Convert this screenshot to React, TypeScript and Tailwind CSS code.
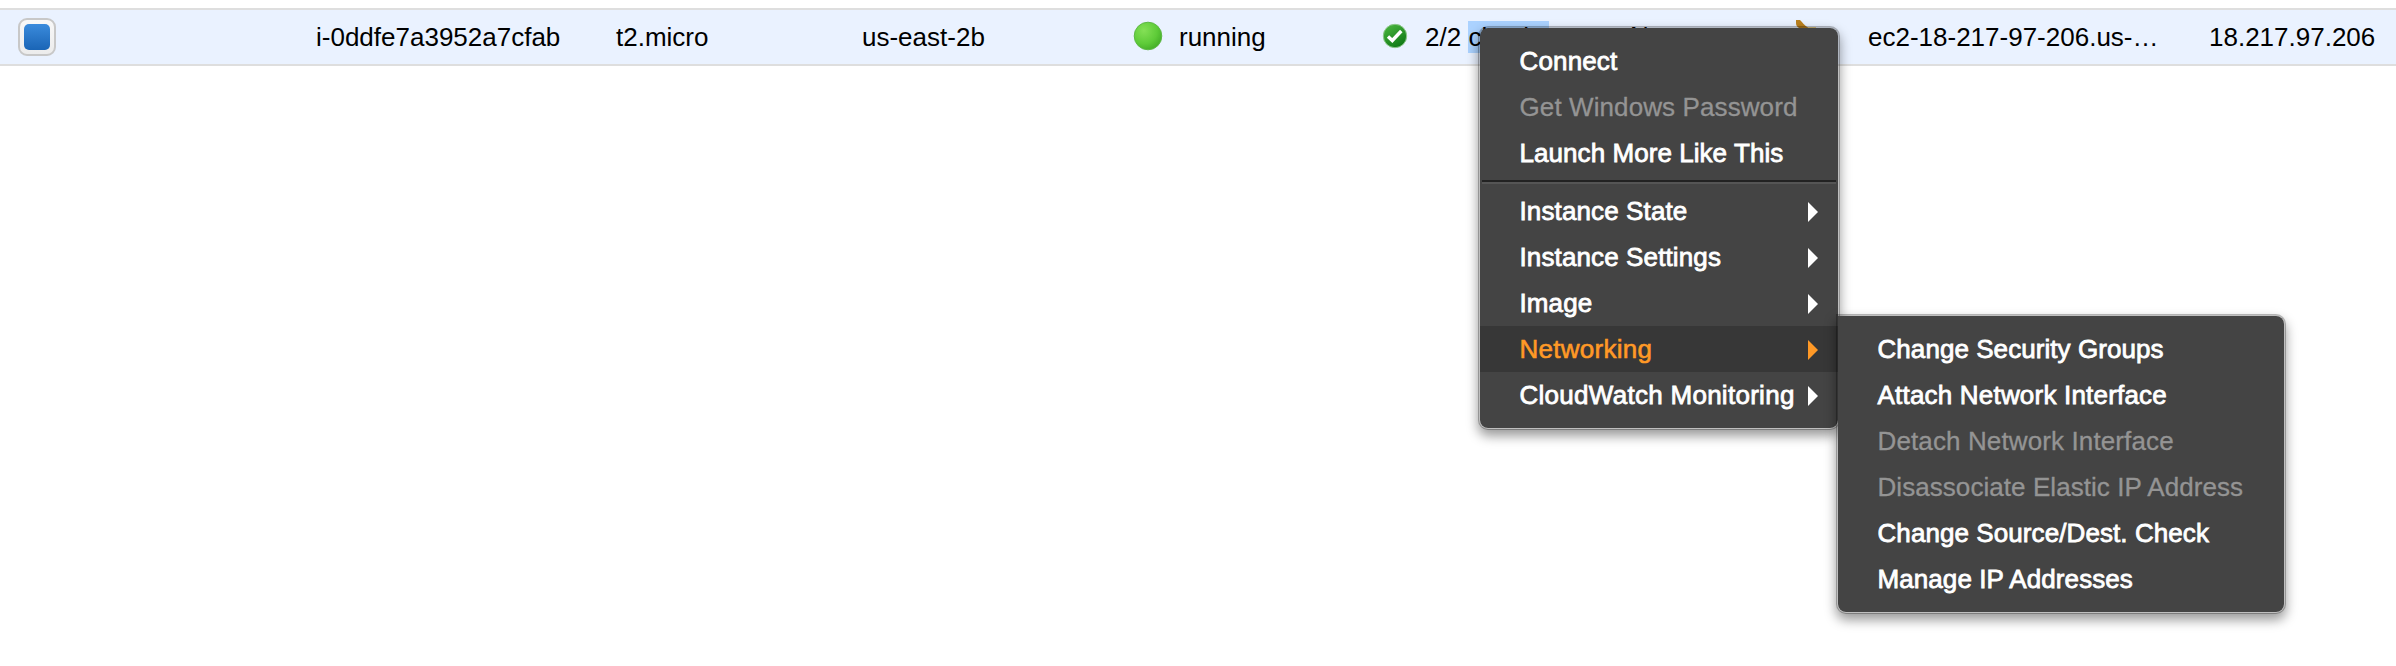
type Item = { label: string; disabled?: boolean; submenu?: boolean; active?: boolean; tracking: string };

const primary: Item[] = [
  { label: "Connect", tracking: "tracking-[0.15px]" },
  { label: "Get Windows Password", disabled: true, tracking: "tracking-[0.1px]" },
  { label: "Launch More Like This", tracking: "tracking-[0.06px]" },
];

const secondary: Item[] = [
  { label: "Instance State", submenu: true, tracking: "tracking-[0.12px]" },
  { label: "Instance Settings", submenu: true, tracking: "tracking-[0.12px]" },
  { label: "Image", submenu: true, tracking: "tracking-[0.1px]" },
  { label: "Networking", submenu: true, active: true, tracking: "tracking-[0.28px]" },
  { label: "CloudWatch Monitoring", submenu: true, tracking: "tracking-[0.28px]" },
];

const networking: Item[] = [
  { label: "Change Security Groups", tracking: "tracking-[0.06px]" },
  { label: "Attach Network Interface", tracking: "tracking-[0.2px]" },
  { label: "Detach Network Interface", disabled: true, tracking: "tracking-[0.12px]" },
  { label: "Disassociate Elastic IP Address", disabled: true, tracking: "tracking-[0.06px]" },
  { label: "Change Source/Dest. Check", tracking: "tracking-[0.08px]" },
  { label: "Manage IP Addresses", tracking: "tracking-[0.08px]" },
];

function MenuItem({ item }: { item: Item }) {
  const tone = item.disabled
    ? "text-[#949494] [-webkit-text-stroke:0.3px_#949494]"
    : item.active
      ? "bg-[#373737] text-[#ff9926] [-webkit-text-stroke:0.6px_#ff9926]"
      : "text-white [-webkit-text-stroke:0.8px_#ffffff]";
  return (
    <li className={`flex h-[46px] items-center justify-between pr-5 pl-[39.5px] ${tone}`}>
      <span className={item.tracking}>{item.label}</span>
      {item.submenu && (
        <svg width="10" height="20" viewBox="0 0 10 20" fill="currentColor" className="mt-0.5">
          <path d="M0 0L10 10L0 20Z" />
        </svg>
      )}
    </li>
  );
}

const panel =
  "absolute rounded-[10px] border-2 border-black/25 bg-[#444444] bg-clip-padding py-2.5 shadow-[0_6px_12px_rgba(0,0,0,0.4)]";

export default function App() {
  return (
    <div className="relative h-[666px] w-[2396px] overflow-hidden bg-white pt-2 font-['Liberation_Sans',Arial,sans-serif] text-[26px] leading-8 whitespace-nowrap text-black">
      <div className="flex h-[58px] items-center border-y-2 border-[#dedede] bg-[#eaf2ff] pl-[18px]">
        <div className="w-[298px]">
          <div className="flex size-[38px] items-center justify-center rounded-[9px] border-2 border-[#c8c8c8] bg-linear-to-b from-[#f8f8f8] to-[#ececec]">
            <div className="size-[26px] rounded-[5px] bg-linear-to-b from-[#3a8bdc] to-[#1a65b6]" />
          </div>
        </div>
        <div className="w-[300px]">i-0ddfe7a3952a7cfab</div>
        <div className="w-[246px]">t2.micro</div>
        <div className="w-[271px]">us-east-2b</div>
        <div className="flex w-[249px] items-center">
          <svg width="30" height="30" viewBox="0 0 30 30" className="mr-4 mb-0.5">
            <defs>
              <radialGradient id="ball" cx="0.35" cy="0.3" r="0.8">
                <stop offset="0" stopColor="#84e056" />
                <stop offset="0.6" stopColor="#5ecb38" />
                <stop offset="1" stopColor="#3fa824" />
              </radialGradient>
            </defs>
            <circle cx="15" cy="15" r="13.8" fill="url(#ball)" stroke="#5cb844" strokeWidth="1" />
          </svg>
          running
        </div>
        <div className="flex w-[248px] items-center">
          <svg width="26" height="26" viewBox="0 0 26 26" className="mr-[17px] mb-0.5">
            <defs>
              <linearGradient id="ok" x1="0.2" y1="0" x2="0.8" y2="1">
                <stop offset="0" stopColor="#4ab53e" />
                <stop offset="1" stopColor="#0a7412" />
              </linearGradient>
            </defs>
            <circle cx="13" cy="13" r="11.7" fill="url(#ok)" stroke="#8dc78a" strokeWidth="1" />
            <path d="M6 13.5L10.3 17.5L19.3 8" fill="none" stroke="#fff" strokeWidth="3.4" />
          </svg>
          <span className="whitespace-pre">2/2 </span>
          <span className="bg-[#abd2ff]">checks</span>
        </div>
        <div className="w-[166px] pb-0.5">None</div>
        <svg width="32" height="34" viewBox="0 0 32 34" className="mr-10">
          <path d="M0 0H4C6 2 9 6 12 7.5H20V34H6L3 8C1 7 0 5 0 3Z" fill="#b9801f" />
          <path d="M12 7H20V10H12Z" fill="#e6cf8a" />
        </svg>
        <div className="w-[341px]">ec2-18-217-97-206.us-…</div>
        <div>18.217.97.206</div>
      </div>

      <ul className={`${panel} top-[26px] left-[1478px] w-[362px]`}>
        {primary.map((i) => (
          <MenuItem key={i.label} item={i} />
        ))}
        <li className="mx-0.5 my-1 h-1 border-t-2 border-b-2 border-t-[#222222] border-b-[#555555]" />
        {secondary.map((i) => (
          <MenuItem key={i.label} item={i} />
        ))}
      </ul>

      <ul className={`${panel} top-[314px] left-[1836px] w-[450px] rounded-tl-none`}>
        {networking.map((i) => (
          <MenuItem key={i.label} item={i} />
        ))}
      </ul>
    </div>
  );
}
